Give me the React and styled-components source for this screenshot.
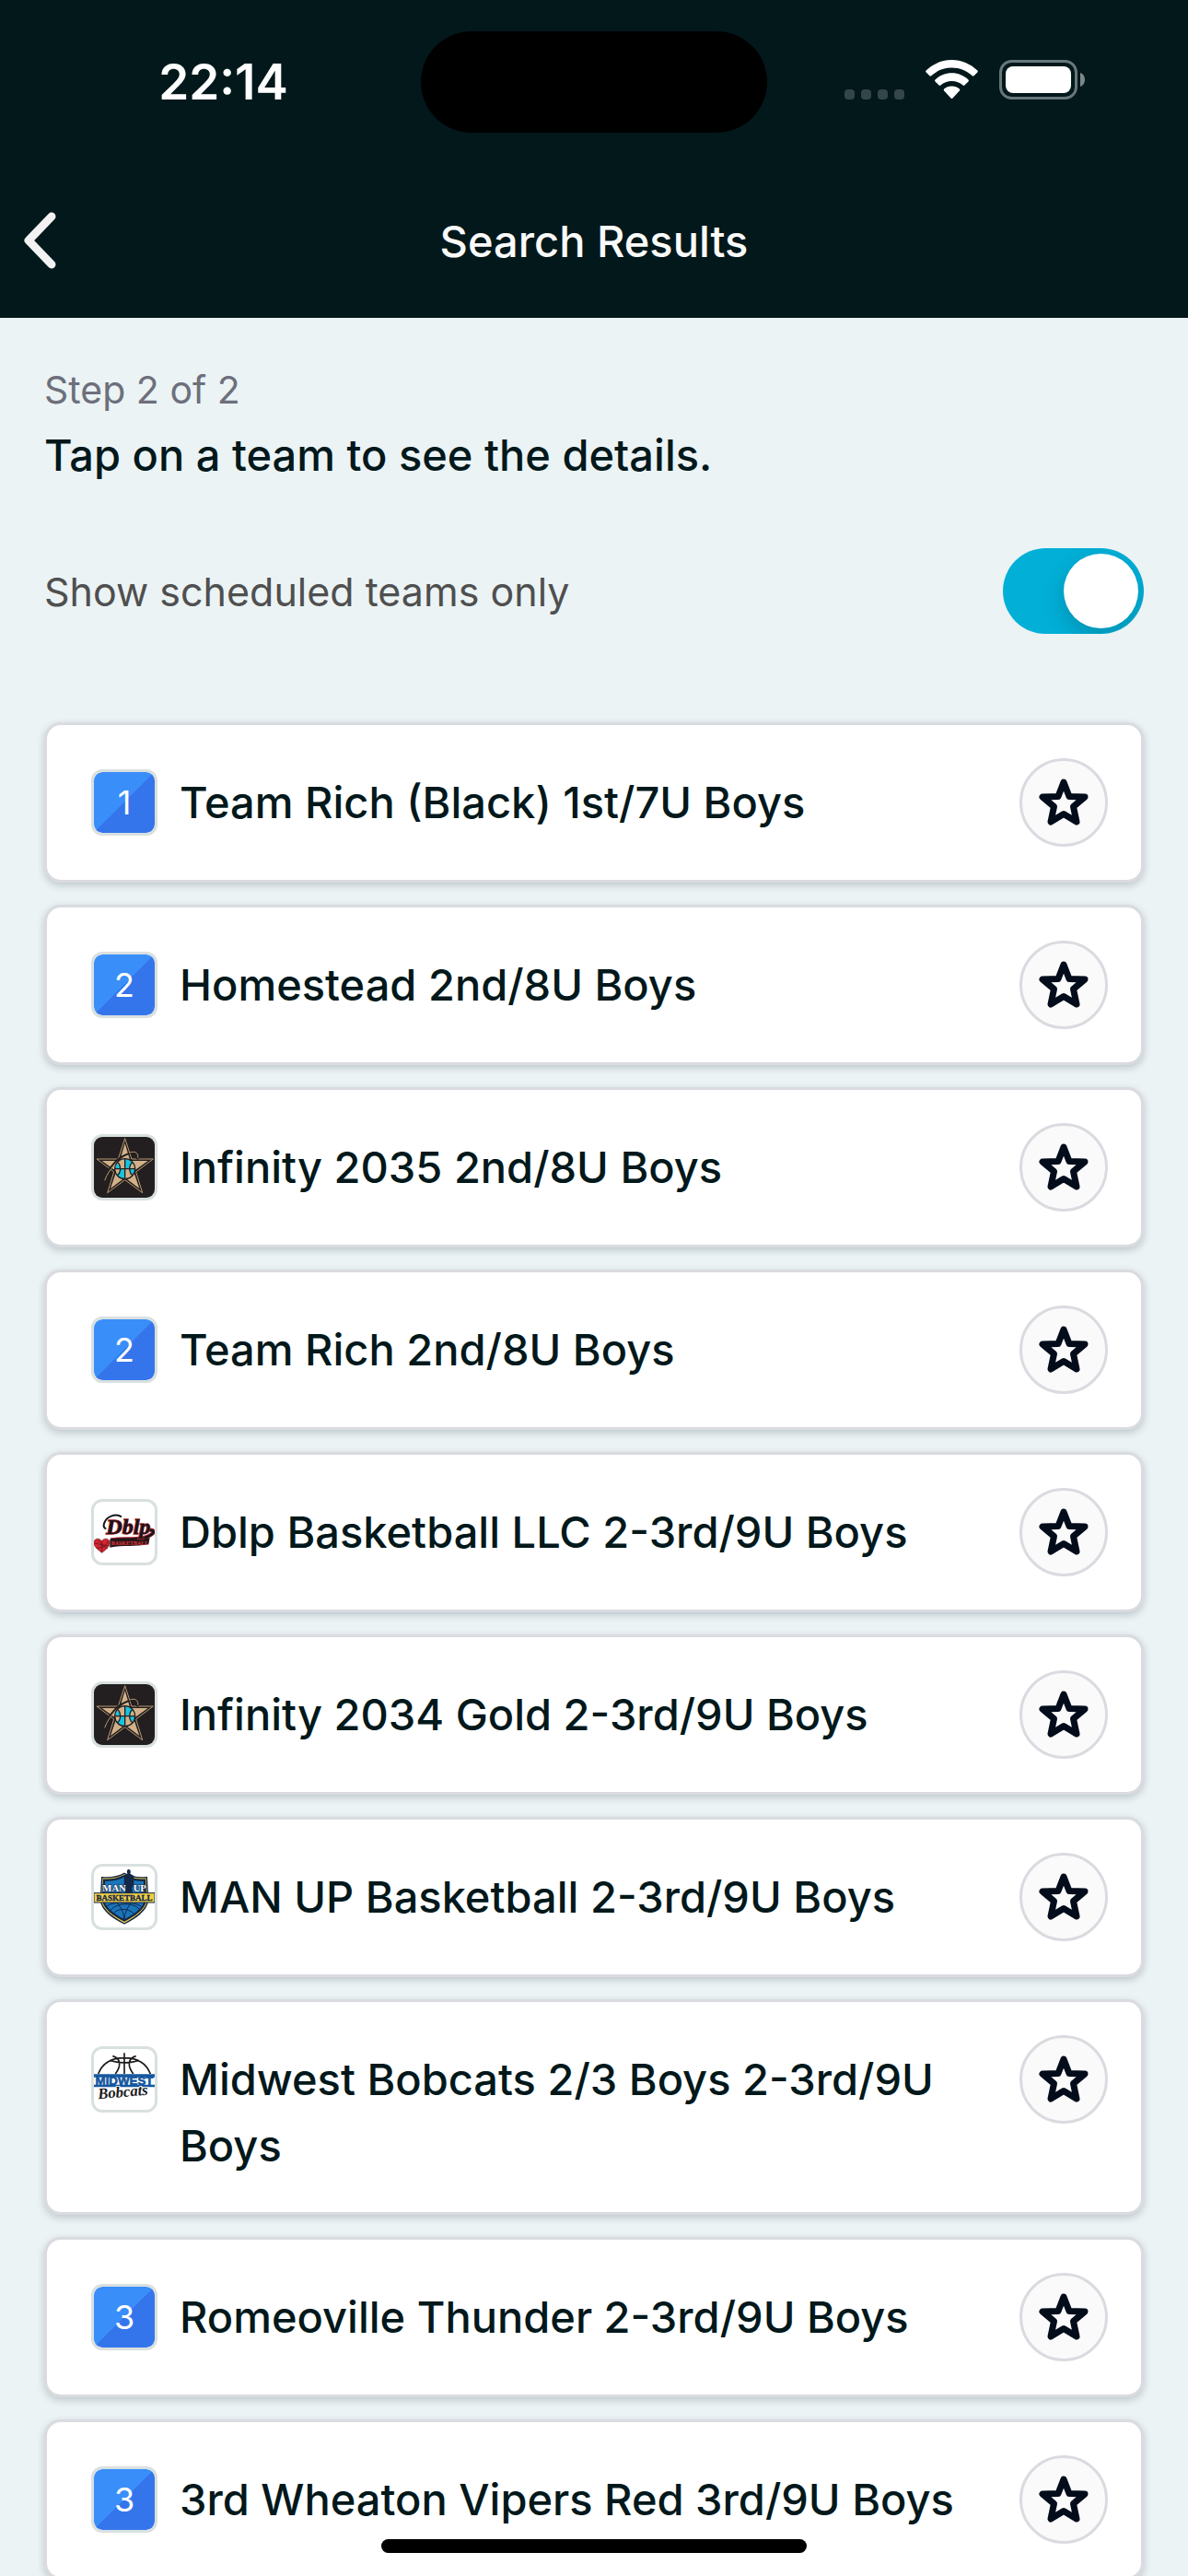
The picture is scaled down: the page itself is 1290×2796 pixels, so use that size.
import React from "react";
import styled, { createGlobalStyle } from "styled-components";

const GlobalStyle = createGlobalStyle`
	* {
		box-sizing: border-box;
	}
	body {
		margin: 0;
		background: #ebf3f5;
		font-family: Inter, "Liberation Sans", sans-serif;
		color: #02181b;
	}
`;

const Screen = styled.div`
	height: 100vh;
	display: flex;
	flex-direction: column;
	overflow: hidden;
`;

const Header = styled.header`
	flex: none;
	background: #02181b;
	color: #fafafa;
`;

const StatusBar = styled.div`
	display: grid;
	grid-template-columns: 1fr 376px 1fr;
	align-items: center;
	justify-items: center;
	height: 177px;
	padding: 0 28px;
`;

const Time = styled.time`
	font-size: 53px;
	font-weight: 600;
	color: #fff;
`;

const Island = styled.div`
	width: 100%;
	height: 110px;
	border-radius: 55px;
	background: #000;
`;

const StatusIcons = styled.div`
	display: flex;
	align-items: flex-end;
	gap: 23px;
	padding-bottom: 4px;

	svg {
		display: block;
	}
`;

const NavBar = styled.nav`
	display: grid;
	grid-template-columns: 96px 1fr 96px;
	align-items: center;
	height: 168px;
`;

const BackButton = styled.button`
	height: 96px;
	padding: 0 0 0 24px;
	border: 0;
	background: none;
	text-align: left;

	svg {
		display: block;
	}
`;

const NavTitle = styled.h1`
	margin: 0;
	font-size: 47px;
	font-weight: 500;
	text-align: center;
`;

const Content = styled.main`
	flex: 1;
	min-height: 0;
	padding: 45px 48px 0;
	overflow-y: auto;
	scrollbar-width: none;
`;

const Step = styled.p`
	margin: 0;
	font-size: 41px;
	line-height: 66px;
	color: #6d6f7b;
`;

const Instruction = styled.h2`
	margin: 0;
	font-size: 47px;
	font-weight: 500;
	line-height: 76px;
`;

const FilterRow = styled.label`
	display: flex;
	align-items: center;
	justify-content: space-between;
	margin: 63px 0 96px;
	font-size: 43px;
	color: #4f4f4f;
`;

const Switch = styled.input`
	appearance: none;
	display: flex;
	align-items: center;
	justify-content: ${(props) => (props.checked ? "flex-end" : "flex-start")};
	width: 153px;
	height: 93px;
	margin: 0;
	padding: 6px;
	border-radius: 47px;
	overflow: hidden;
	background: ${(props) => (props.checked ? "#02afd7" : "#d0d6d8")};

	&::before {
		content: "";
		width: 81px;
		height: 81px;
		border-radius: 50%;
		background: #fff;
		box-shadow: 0 9px 24px rgba(0, 0, 0, 0.18);
	}
`;

const TeamList = styled.ul`
	display: flex;
	flex-direction: column;
	gap: 24px;
	margin: 0;
	padding: 0;
	list-style: none;
`;

const TeamCard = styled.li`
	display: flex;
	align-items: flex-start;
	gap: 24px;
	padding: 36px;
	border: 3px solid #dadbe0;
	border-radius: 18px;
	background: #fff;
	box-shadow: 0 3px 9px rgba(0, 20, 30, 0.2);
`;

const TeamLink = styled.a`
	flex: 1;
	display: flex;
	align-items: flex-start;
	gap: 24px;
	padding: 12px 0 0 12px;
	color: inherit;
	text-decoration: none;
`;

const Badge = styled.span`
	flex: none;
	display: flex;
	align-items: center;
	justify-content: center;
	width: 72px;
	height: 72px;
	border: 3px solid #d9e0e0;
	border-radius: 12px;
	overflow: hidden;
	font-size: 36px;
	color: #fff;
	background: ${(props) =>
		props.$grade ? "linear-gradient(135deg, #3a8ef9 50%, #3575ec 50%) padding-box" : "#fff"};

	svg {
		display: block;
		width: 66px;
		height: 66px;
	}
`;

const TeamName = styled.span`
	font-size: 47px;
	font-weight: 500;
	line-height: 72px;
`;

const StarButton = styled.button`
	flex: none;
	width: 96px;
	height: 96px;
	padding: 0;
	border: 3px solid #dadae0;
	border-radius: 50%;
	background: #fafafa;

	svg {
		display: block;
	}
`;

const HomeIndicator = styled.div`
	position: fixed;
	bottom: 25px;
	left: 50%;
	width: 462px;
	height: 15px;
	margin-left: -231px;
	border-radius: 8px;
	background: #000;
`;

const SignalIcon = () => (
	<svg width="65" height="11" viewBox="0 0 65 11" fill="#35464a">
		<rect x="0" width="11" height="11" rx="4" />
		<rect x="18" width="11" height="11" rx="4" />
		<rect x="36" width="11" height="11" rx="4" />
		<rect x="54" width="11" height="11" rx="4" />
	</svg>
);

const WifiIcon = () => (
	<svg width="57" height="43" viewBox="0 0 57 43" fill="#fff">
		<path d="M28.5 0C39 0 48.500 4.100 56.400 11.600Q57.200 12.500 56.400 13.400L52.600 17.300Q51.700 18.100 50.800 17.300C44.500 11.500 37 8.600 28.500 8.600S12.500 11.500 6.200 17.300Q5.300 18.100 4.400 17.300L.6 13.400Q-.2 12.500.6 11.600C8.500 4.100 18 0 28.500 0Z" />
		<path d="M28.500 14.300C35.500 14.300 41.500 16.900 46.500 21.500Q47.300 22.400 46.500 23.400L42.400 27.500Q41.500 28.300 40.600 27.500C37.200 24.600 33.200 23 28.500 23S19.800 24.600 16.400 27.500Q15.500 28.300 14.600 27.500L10.500 23.400Q9.700 22.400 10.500 21.500C15.500 16.900 21.500 14.300 28.500 14.300Z" />
		<path d="M28.500 28.500C31.800 28.500 34.500 29.600 36.900 31.600Q37.700 32.500 36.900 33.500L29.500 41.500Q28.500 42.500 27.500 41.500L20.100 33.500Q19.300 32.500 20.100 31.600C22.500 29.600 25.200 28.500 28.500 28.500Z" />
	</svg>
);

const BatteryIcon = () => (
	<svg width="94" height="43" viewBox="0 0 94 43">
		<rect x="1.500" y="1.500" width="82" height="40" rx="12" fill="none" stroke="#68777a" strokeWidth="3" />
		<rect x="7" y="7" width="71" height="29" rx="8" fill="#fff" />
		<path d="M88 14c3 1 5 4 5 7.500s-2 6.500-5 7.500z" fill="#7b888a" />
	</svg>
);

const BackIcon = () => (
	<svg width="40" height="64" viewBox="0 0 40 64" fill="none" stroke="#f2f2f2" strokeWidth="9">
		<path d="M32 6L7 32l25 26" strokeLinecap="round" strokeLinejoin="round" />
	</svg>
);

const StarIcon = () => (
	<svg width="90" height="90" viewBox="3 3 90 90" fill="none" stroke="#030c1b" strokeWidth="7">
		<path d="M48 26l6 15.500 17 .5-12.500 10.500L62 69l-14-8.500L34 69l3.500-16.500L25 42l17-.5z" strokeLinejoin="round" />
	</svg>
);

const InfinityLogo = () => (
	<svg viewBox="36 42 198 198">
		<rect x="36" y="42" width="198" height="198" fill="#231f20" />
		<path d="M137 47l22 67h70l-56 42 21 68-57-42-57 42 21-68-56-42h70z" fill="#231f20" stroke="#b99a73" strokeWidth="3" />
		<path d="M137 63l17 57h58l-47 34 19 56-47-35-47 35 19-56-47-34h58z" fill="#d3b188" />
		<circle cx="137" cy="146" r="32" fill="#d3b188" />
		<path d="M137 146v-32c13 0 21 5 27 14-8 4-12 10-12 18zM137 146v32c-13 0-21-5-27-14 8-4 12-10 12-18zM105 146c0-7 2-13 6-18 7 4 11 10 11 18zM169 146c0 7-2 13-6 18-7-4-11-10-11-18z" fill="#16c4df" />
		<g fill="none" stroke="#231f20" strokeWidth="4">
			<circle cx="137" cy="146" r="33" />
			<path d="M137 113v66M104 146h66M112 124c13 10 13 34 0 44M162 124c-13 10-13 34 0 44" />
		</g>
		<path d="M72 184c10-46 44-78 85-90 17-5 25 3 20 15M158 106c10-3 17-1 22 9" fill="none" stroke="#231f20" strokeWidth="6" />
		<path d="M71 184c8-22 18-36 33-50M150 94c19-8 32 0 29 16" fill="none" stroke="#b99a73" strokeWidth="3" />
	</svg>
);

const DblpLogo = () => (
	<svg viewBox="36 45 198 198">
		<path d="M91 169c50-9 88 4 120-11 17-8 23-14 16-20l-12-2" fill="none" stroke="#b3252d" strokeWidth="12" />
		<path d="M91 170c50-9 88 4 120-11 17-8 23-14 16-20l-12-2" fill="none" stroke="#17161a" strokeWidth="8" />
		<path d="M88 167c45-4 84 4 130-5l-4 22c-42 8-82 2-126 10z" fill="#2b1719" />
		<text x="92" y="187" fontFamily="Liberation Serif, serif" fontSize="18" fontWeight="700" fill="#e0343e">BASKETBALL</text>
		<text x="76" y="150" fontFamily="Liberation Serif, serif" fontSize="72" fontStyle="italic" fontWeight="700" fill="#17161a" stroke="#b3252d" strokeWidth="4" paintOrder="stroke">Dblp</text>
		<path d="M76 132c-15 1-9-32 18-41 12-4 24-2 32 3" fill="none" stroke="#17161a" strokeWidth="6" />
		<path d="M62 211c-15-11-29-23-26-36 3-12 19-13 25-1 7-12 23-11 26 1 3 13-10 25-25 36z" fill="#d7242f" stroke="#6d1c22" strokeWidth="2" />
		<path d="M62 172v36M38 180c15 1 32 9 43 18M82 173c-3 15-18 22-38 23M50 170c7 11 15 18 35 18" fill="none" stroke="#4a171b" strokeWidth="2" />
	</svg>
);

const ManUpLogo = () => (
	<svg viewBox="36 48 198 198">
		<path d="M135 70c22 13 48 15 73 13l4 75c-5 35-42 58-77 76-35-18-72-41-77-76l4-75c25 2 51 0 73-13z" fill="#f2cf45" stroke="#142748" strokeWidth="4" />
		<path d="M135 79c21 11 43 14 66 13l3 65c-4 28-35 49-69 66-34-17-65-38-69-66l3-65c23 1 45-2 66-13z" fill="#1a75bb" stroke="#142748" strokeWidth="7" />
		<path d="M87 196c15-31 80-36 101-4M97 205c16-27 59-21 75 3M112 168c13 13 22 30 22 54M157 166c-13 17-21 34-23 56M78 176c24-14 81-16 112 1" fill="none" stroke="#142748" strokeWidth="3" />
		<path d="M149 57c6 0 8 7 5 14l12 7v31l-6 8 3 22h-26l3-22-6-8V78l11-7c-3-7-1-14 4-14z" fill="#142748" />
		<g fontFamily="Liberation Serif, serif" fontWeight="700" stroke="#142748" strokeWidth="3" paintOrder="stroke">
			<text x="64" y="129" fontSize="32" fill="#fff">MAN</text>
			<text x="164" y="129" fontSize="32" fill="#fff">UP</text>
		</g>
		<path d="M36 134h198v31H36z" fill="#f2cf45" stroke="#142748" strokeWidth="3" />
		<text x="135" y="159" fontFamily="Liberation Serif, serif" fontSize="27" fontWeight="700" textAnchor="middle" fill="#142748" stroke="#142748">BASKETBALL</text>
	</svg>
);

const MidwestLogo = () => (
	<svg viewBox="36 42 198 198">
		<path d="M50 123c15-38 45-52 85-52s70 14 85 52M135 55v68M88 79c25 10 70 10 95 0M97 65c26 7 29 31 9 58M173 65c-26 7-29 31-9 58" fill="none" stroke="#1b1b1d" strokeWidth="5" />
		<path d="M36 124h198v10H36zM36 158h198v8H36z" fill="#1557a0" />
		<text x="135" y="160" fontFamily="Liberation Sans, sans-serif" fontSize="40" fontWeight="700" textAnchor="middle" fill="#1557a0" stroke="#1557a0" strokeWidth="2">MIDWEST</text>
		<text x="50" y="205" transform="rotate(-5 50 205)" fontFamily="Liberation Serif, serif" fontSize="50" fontStyle="italic" fontWeight="700" fill="#1b1b1d" stroke="#fff" strokeWidth="5" paintOrder="stroke">Bobcats</text>
	</svg>
);

const teams = [
	{ name: "Team Rich (Black) 1st/7U Boys", grade: 1 },
	{ name: "Homestead 2nd/8U Boys", grade: 2 },
	{ name: "Infinity 2035 2nd/8U Boys", logo: InfinityLogo },
	{ name: "Team Rich 2nd/8U Boys", grade: 2 },
	{ name: "Dblp Basketball LLC 2-3rd/9U Boys", logo: DblpLogo },
	{ name: "Infinity 2034 Gold 2-3rd/9U Boys", logo: InfinityLogo },
	{ name: "MAN UP Basketball 2-3rd/9U Boys", logo: ManUpLogo },
	{ name: "Midwest Bobcats 2/3 Boys 2-3rd/9U Boys", logo: MidwestLogo },
	{ name: "Romeoville Thunder 2-3rd/9U Boys", grade: 3 },
	{ name: "3rd Wheaton Vipers Red 3rd/9U Boys", grade: 3 },
];

const Team = ({ name, grade, logo: Logo }) => (
	<TeamCard>
		<TeamLink href="#">
			<Badge $grade={grade}>{Logo ? <Logo /> : grade}</Badge>
			<TeamName>{name}</TeamName>
		</TeamLink>
		<StarButton type="button" aria-label={"Favorite " + name}>
			<StarIcon />
		</StarButton>
	</TeamCard>
);

const App = () => {
	const [scheduledOnly, setScheduledOnly] = React.useState(true);

	return (
		<Screen>
			<GlobalStyle />
			<Header>
				<StatusBar>
					<Time>22:14</Time>
					<Island />
					<StatusIcons>
						<SignalIcon />
						<WifiIcon />
						<BatteryIcon />
					</StatusIcons>
				</StatusBar>
				<NavBar>
					<BackButton type="button" aria-label="Back">
						<BackIcon />
					</BackButton>
					<NavTitle>Search Results</NavTitle>
				</NavBar>
			</Header>
			<Content>
				<Step>Step 2 of 2</Step>
				<Instruction>Tap on a team to see the details.</Instruction>
				<FilterRow htmlFor="scheduled-only">
					Show scheduled teams only
					<Switch
						id="scheduled-only"
						type="checkbox"
						role="switch"
						checked={scheduledOnly}
						onChange={() => setScheduledOnly(!scheduledOnly)}
					/>
				</FilterRow>
				<TeamList>
					{teams.map((team) => (
						<Team key={team.name} {...team} />
					))}
				</TeamList>
			</Content>
			<HomeIndicator />
		</Screen>
	);
};

export default App;
